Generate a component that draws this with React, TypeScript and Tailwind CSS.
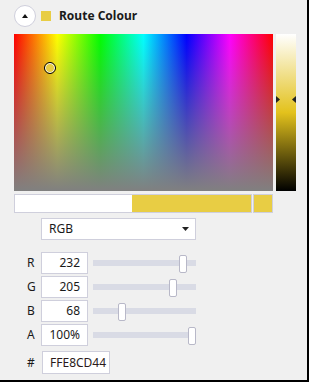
import React from "react";

const font = { fontFamily: '"Noto Sans", "Open Sans", sans-serif' };

const rows: { label: string; value: string; v: number }[] = [
  { label: "R", value: "232", v: 232 / 255 },
  { label: "G", value: "205", v: 205 / 255 },
  { label: "B", value: "68", v: 68 / 255 },
  { label: "A", value: "100%", v: 1 },
];

function SliderRow({ label, value, v }: { label: string; value: string; v: number }) {
  return (
    <div className="flex items-center h-[22px]">
      <div className="w-[27px] pl-[13px] text-[12px] text-[#1a1a1a] leading-none">{label}</div>
      <div className="w-[47px] h-[22px] bg-white border border-[#cfcfdc] flex items-center justify-end pr-[7px] text-[12px] text-[#1a1a1a]">
        {value}
      </div>
      <div className="relative ml-[5px] w-[103px] h-[22px] flex items-center">
        <div className="w-full h-[6px] bg-[#d9dbe5]" />
        <div
          className="absolute top-[3px] w-[8px] h-[18px] bg-white border border-[#b8b8c8] rounded-[2px]"
          style={{ left: Math.round(v * 95) }}
        />
      </div>
    </div>
  );
}

export default function App() {
  return (
    <div
      className="w-[309px] h-[382px] bg-[#f0f0f0] border-r-2 border-b-2 border-black box-border pl-[14px] flex flex-col"
      style={font}
    >
      <div className="mt-[5px] flex items-center h-[22px]">
        <div className="w-[22px] h-[22px] rounded-full bg-white border border-[#cfcfdc] flex items-center justify-center">
          <svg width="6" height="4" viewBox="0 0 6 4">
            <path d="M0 4 L3 0 L6 4 Z" fill="#111" />
          </svg>
        </div>
        <div className="ml-[5px] w-[10px] h-[10px] bg-[#e8cd44]" />
        <div className="ml-[8px] text-[12px] font-bold text-[#1a1a1a]">Route Colour</div>
      </div>

      <div className="mt-[7px] flex">
        <div
          className="relative w-[259px] h-[157px]"
          style={{
            background:
              "linear-gradient(to bottom, rgba(128,128,128,0), #808080), linear-gradient(to right, #ff0000, #ffff00 16.67%, #00ff00 33.33%, #00ffff 50%, #0000ff 66.67%, #ff00ff 83.33%, #ff0000)",
          }}
        >
          <div className="absolute left-[30px] top-[28px] w-[12px] h-[12px] rounded-full border border-black bg-[#e8cd44] shadow-[inset_0_0_0_1px_white]" />
        </div>
        <div
          className="relative ml-[3px] w-[20px] h-[157px]"
          style={{
            background: "linear-gradient(to bottom, #ffffff, hsl(50,78%,50%) 50%, #000000)",
          }}
        >
          <svg className="absolute left-0 top-[62px]" width="4" height="7" viewBox="0 0 4 7">
            <path d="M0 0 L4 3.5 L0 7 Z" fill="#222" />
          </svg>
          <svg className="absolute left-[16px] top-[62px]" width="4" height="7" viewBox="0 0 4 7">
            <path d="M4 0 L0 3.5 L4 7 Z" fill="#222" />
          </svg>
        </div>
      </div>

      <div className="mt-[3px] flex h-[19px]">
        <div className="w-[238px] h-[19px] border border-[#cfcfdc] flex">
          <div className="w-[117px] bg-white" />
          <div className="flex-1 bg-[#e8cd44]" />
        </div>
        <div className="ml-[1px] w-[20px] h-[19px] border border-[#cfcfdc] bg-[#e8cd44]" />
      </div>

      <div className="mt-[5px] ml-[27px] w-[155px] h-[22px] bg-white border border-[#cfcfdc] flex items-center justify-between pl-[7px] pr-[6px]">
        <span className="text-[12px] text-[#1a1a1a]">RGB</span>
        <svg width="7" height="4" viewBox="0 0 7 4">
          <path d="M0 0 L7 0 L3.5 4 Z" fill="#222" />
        </svg>
      </div>

      <div className="mt-[12px] flex flex-col gap-[2px]">
        {rows.map((r) => (
          <SliderRow key={r.label} {...r} />
        ))}
      </div>

      <div className="mt-[5px] flex items-center h-[23px]">
        <div className="w-[28px] pl-[13px] text-[12px] text-[#1a1a1a]">#</div>
        <div className="w-[68px] h-[23px] bg-white border border-[#cfcfdc] flex items-center pl-[7px] text-[12px] text-[#2a1a1a]">
          FFE8CD44
        </div>
      </div>
    </div>
  );
}
